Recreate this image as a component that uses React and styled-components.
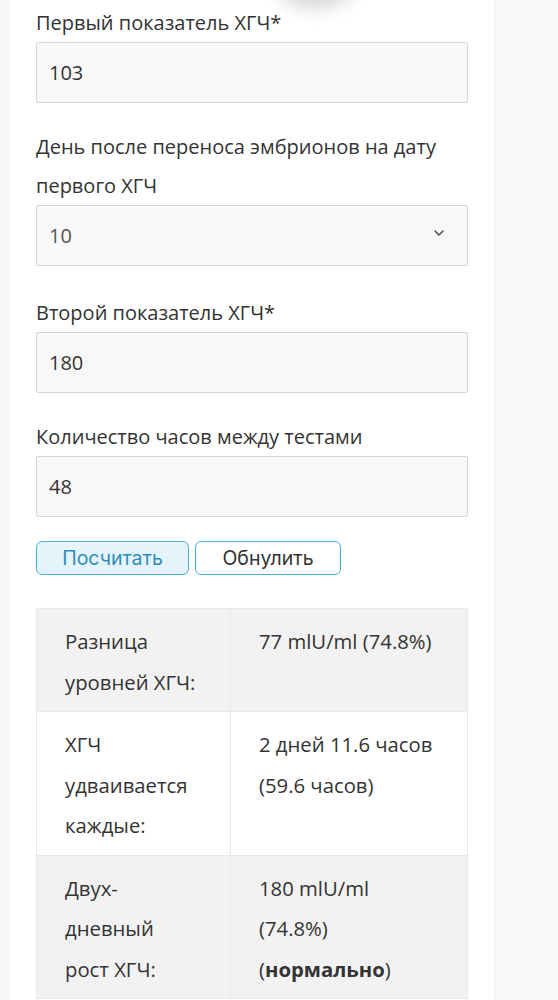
import React from "react";
import styled, { createGlobalStyle } from "styled-components";

const GlobalStyle = createGlobalStyle`
  html, body {
    margin: 0;
    padding: 0;
    background: #f7f7f7;
  }
  body {
    font-family: "Open Sans", "Noto Sans", sans-serif;
    color: #333;
  }
`;

const results = [
  { label: "Разница уровней ХГЧ:", value: "77 mlU/ml (74.8%)", shaded: true },
  {
    label: "ХГЧ удваивается каждые:",
    value: "2 дней 11.6 часов (59.6 часов)",
    shaded: false,
  },
  {
    label: "Двух-дневный рост ХГЧ:",
    value: (
      <>
        180 mlU/ml (74.8%) (<b>нормально</b>)
      </>
    ),
    shaded: true,
  },
];

class App extends React.Component {
  render() {
    return (
      <Page>
        <GlobalStyle />
        <LeftStrip />
        <Card>
          <TopShadow />
          <Field>
            <Label>Первый показатель ХГЧ*</Label>
            <Input type="text" defaultValue="103" />
          </Field>
          <Field gap={27}>
            <Label>День после переноса эмбрионов на дату первого ХГЧ</Label>
            <SelectBox>
              <SelectValue>10</SelectValue>
              <Chevron viewBox="0 0 10 6" aria-hidden="true">
                <path d="M1 1l4 4 4-4" />
              </Chevron>
            </SelectBox>
          </Field>
          <Field gap={24}>
            <Label>Второй показатель ХГЧ*</Label>
            <Input type="text" defaultValue="180" />
          </Field>
          <Field>
            <Label>Количество часов между тестами</Label>
            <Input type="text" defaultValue="48" />
          </Field>
          <Buttons>
            <Button type="button" primary>
              Посчитать
            </Button>
            <Button type="button">Обнулить</Button>
          </Buttons>
          <Table>
            <tbody>
              {results.map((r, i) => (
                <Row key={i} shaded={r.shaded}>
                  <LabelCell>{r.label}</LabelCell>
                  <ValueCell>{r.value}</ValueCell>
                </Row>
              ))}
            </tbody>
          </Table>
        </Card>
        <Sidebar />
      </Page>
    );
  }
}

export default App;

const Page = styled.div`
  display: flex;
  flex-direction: row;
  min-height: 1000px;
  overflow: hidden;
`;

const LeftStrip = styled.div`
  width: 10px;
  flex-shrink: 0;
  background: #f7f7f7;
`;

const Card = styled.div`
  position: relative;
  width: 484px;
  flex-shrink: 0;
  box-sizing: border-box;
  padding: 3px 26px 0 26px;
  background: #fff;
  overflow: hidden;
`;

const TopShadow = styled.div`
  position: absolute;
  top: -30px;
  left: 268px;
  width: 74px;
  height: 38px;
  border-radius: 50%;
  background: rgba(0, 0, 0, 0.16);
  filter: blur(9px);
`;

const Sidebar = styled.div`
  flex: 1;
  background: #f8f8f8;
  border-left: 1px solid #ececec;
`;

const Field = styled.div`
  display: flex;
  flex-direction: column;
  margin-bottom: ${(p) => p.gap || 24}px;
`;

const Label = styled.label`
  font-size: 20px;
  line-height: 39px;
  color: #333;
`;

const Input = styled.input`
  box-sizing: border-box;
  width: 100%;
  height: 61px;
  padding: 0 12px;
  border: 1px solid #d6d6d6;
  border-radius: 2px;
  background: #f8f8f8;
  font-family: "Open Sans", "Noto Sans", sans-serif;
  font-size: 20px;
  color: #333;
  outline: none;
`;

const SelectBox = styled.div`
  box-sizing: border-box;
  display: flex;
  align-items: center;
  justify-content: space-between;
  height: 61px;
  padding: 0 23px 0 12px;
  border: 1px solid #d6d6d6;
  border-radius: 2px;
  background: #f8f8f8;
`;

const SelectValue = styled.span`
  font-size: 20px;
  color: #555;
`;

const Chevron = styled.svg`
  width: 10px;
  height: 6px;
  margin-top: -6px;
  fill: none;
  stroke: #555;
  stroke-width: 1.6;
  stroke-linecap: round;
  stroke-linejoin: round;
`;

const Buttons = styled.div`
  display: flex;
  flex-direction: row;
  gap: 6px;
  margin-top: 2px;
  margin-bottom: 33px;
`;

const Button = styled.button`
  box-sizing: border-box;
  height: 34px;
  padding: 0;
  width: ${(p) => (p.primary ? "153px" : "146px")};
  border: 1.5px solid #4cb1da;
  border-radius: 6px;
  background: ${(p) => (p.primary ? "#e5f4fb" : "#fff")};
  color: ${(p) => (p.primary ? "#2e8dbb" : "#333")};
  font-family: "Inter", "Lato", sans-serif;
  font-size: 19.5px;
  cursor: pointer;
`;

const Table = styled.table`
  width: 432px;
  border-collapse: collapse;
  table-layout: fixed;
`;

const Row = styled.tr`
  background: ${(p) => (p.shaded ? "#f2f2f2" : "#fff")};
`;

const LabelCell = styled.td`
  width: 194px;
  box-sizing: border-box;
  vertical-align: top;
  padding: 12px 28px 9px 28px;
  border: 1px solid #e9e9e9;
  font-size: 20.3px;
  line-height: 40.5px;
  color: #333;
`;

const ValueCell = styled(LabelCell)`
  width: auto;
  b {
    font-weight: 700;
  }
`;
